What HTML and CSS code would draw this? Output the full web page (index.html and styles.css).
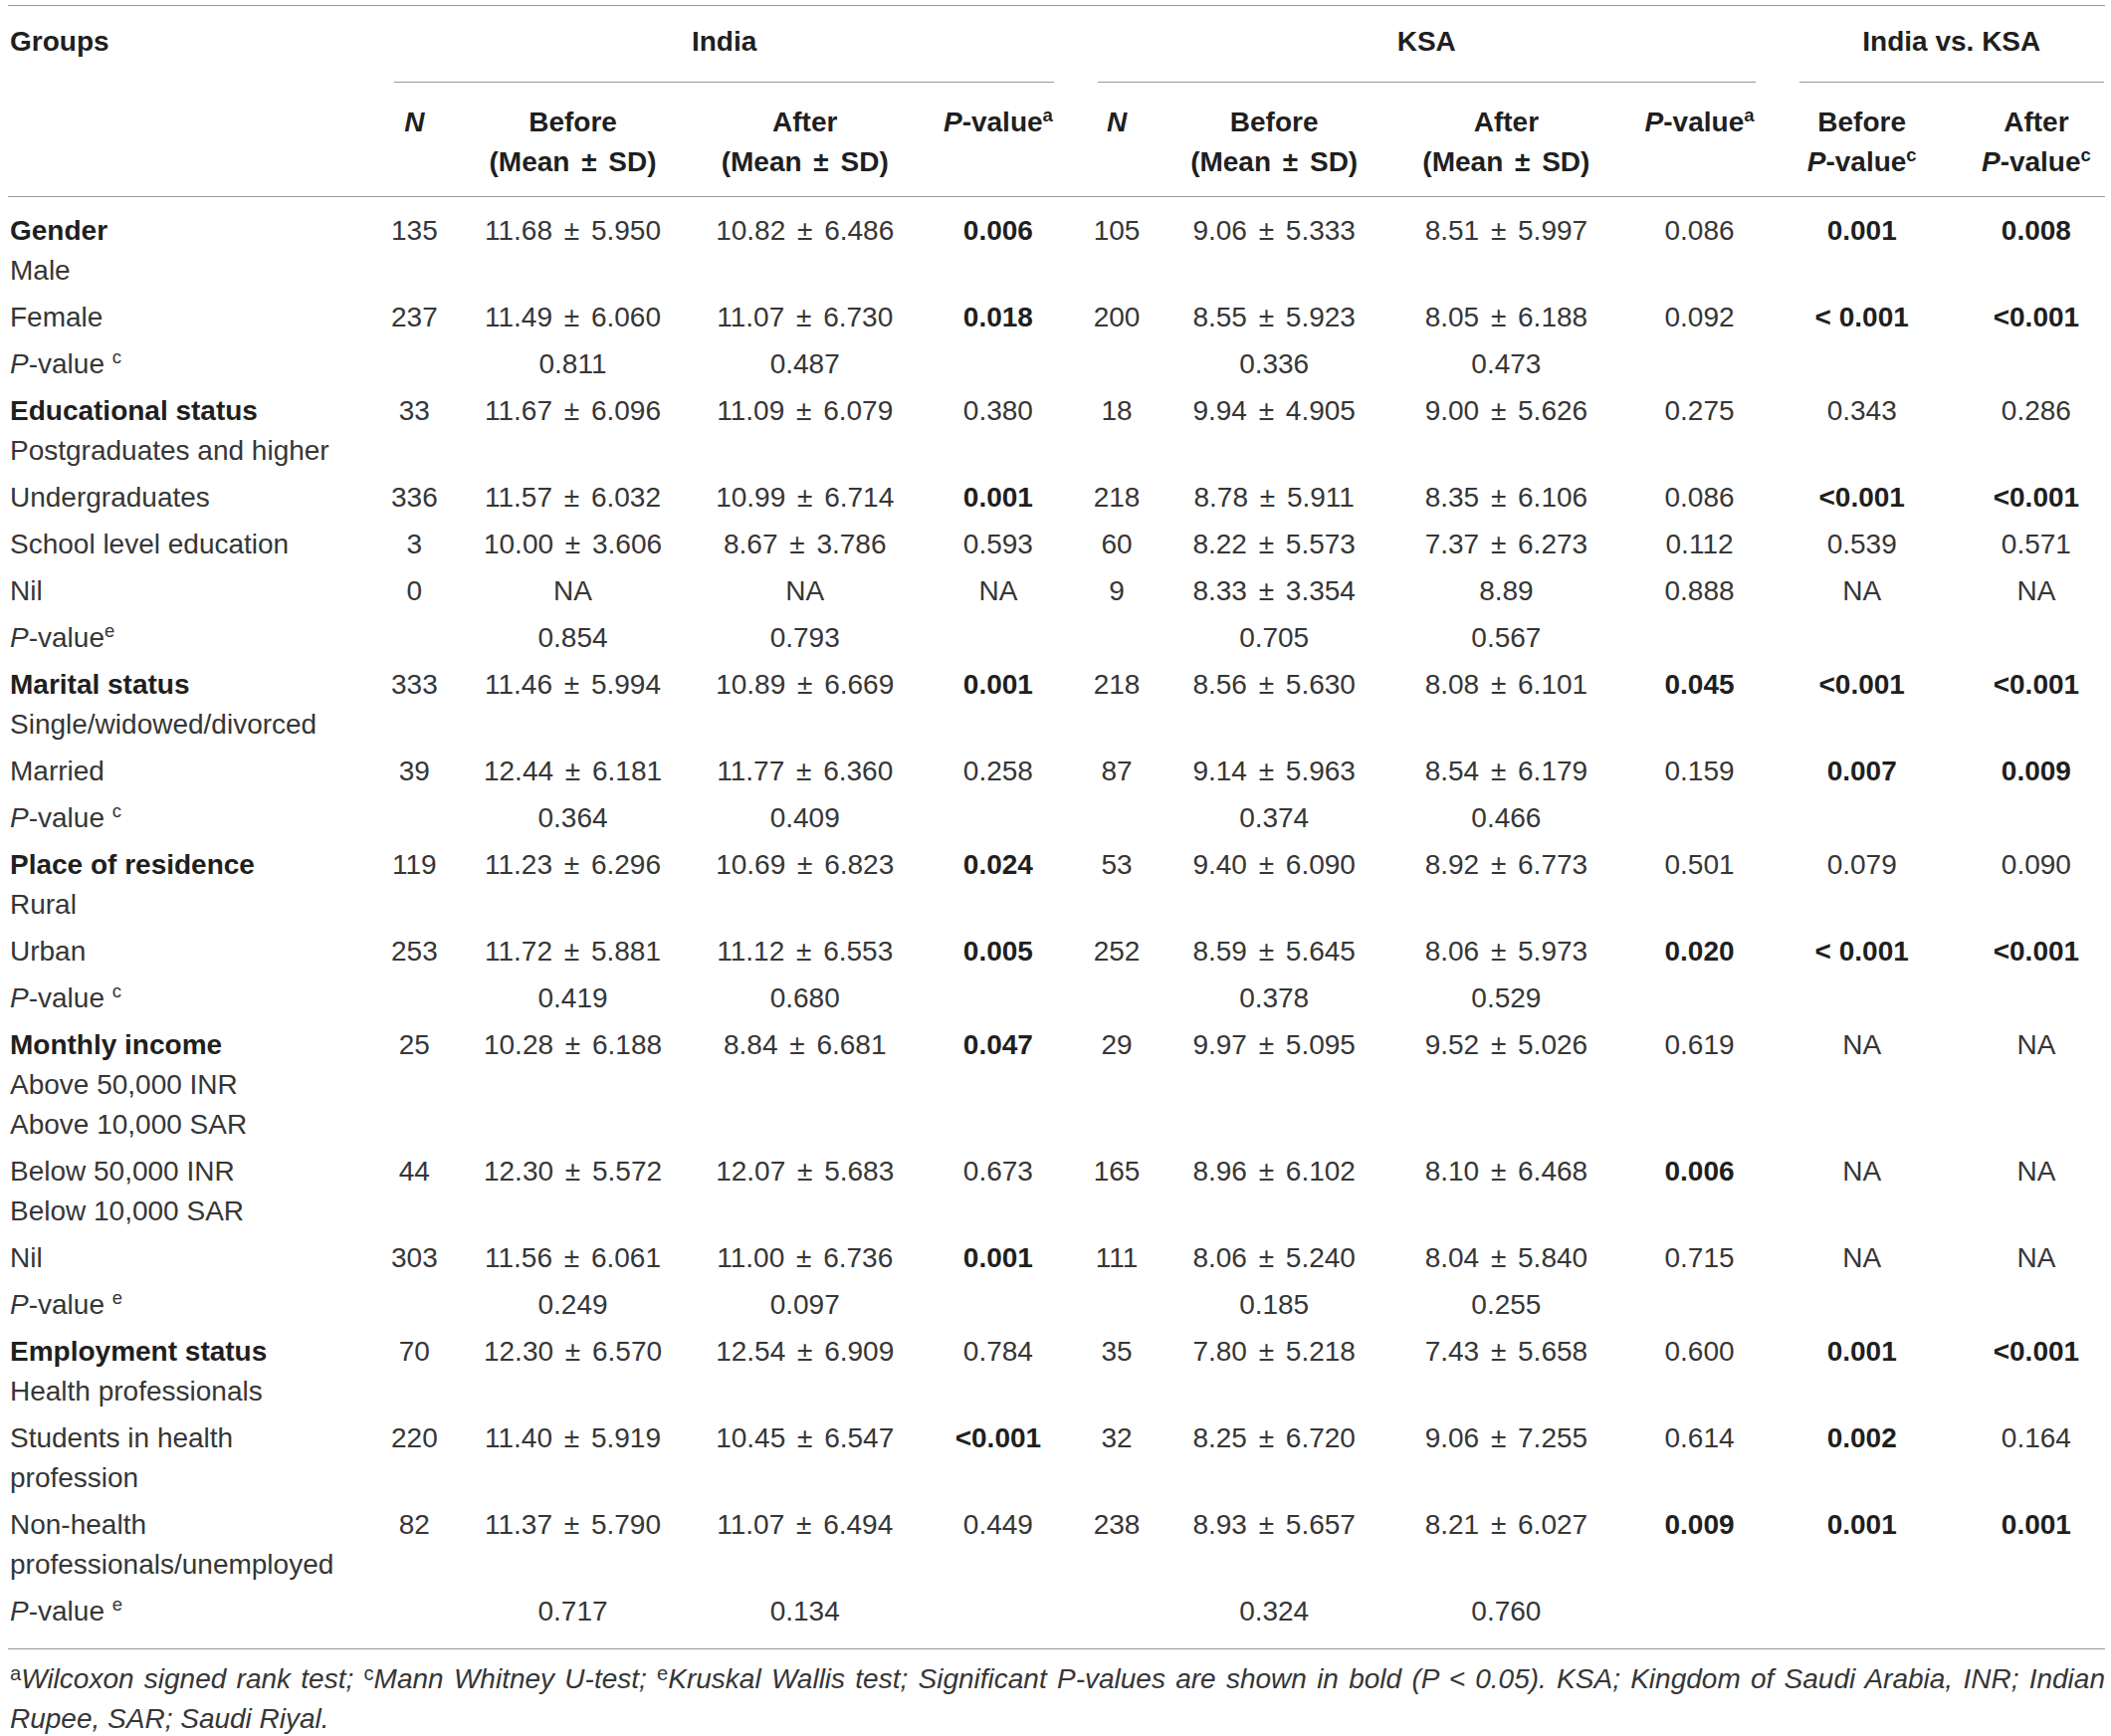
FILE: index.html
```html
<!DOCTYPE html>
<html lang="en">
<head>
<meta charset="utf-8">
<title>Table</title>
<link rel="stylesheet" href="styles.css">
</head>
<body>
<div class="page">
<table class="data">
  <colgroup>
    <col class="c-grp"><col class="c-n"><col class="c-b"><col class="c-a"><col class="c-p">
    <col class="c-n2"><col class="c-b"><col class="c-a"><col class="c-p"><col class="c-vb"><col class="c-va">
  </colgroup>
  <thead>
    <tr class="h1">
      <th rowspan="2" class="lbl groups">Groups</th>
      <th colspan="4" class="grp"><div class="grp-label">India</div></th>
      <th colspan="4" class="grp"><div class="grp-label">KSA</div></th>
      <th colspan="2" class="grp"><div class="grp-label">India vs. KSA</div></th>
    </tr>
    <tr class="h2">
      <th><i>N</i></th>
      <th>Before<br><span class="pm">(Mean ± SD)</span></th>
      <th>After<br><span class="pm">(Mean ± SD)</span></th>
      <th><i>P</i>-value<sup>a</sup></th>
      <th><i>N</i></th>
      <th>Before<br><span class="pm">(Mean ± SD)</span></th>
      <th>After<br><span class="pm">(Mean ± SD)</span></th>
      <th><i>P</i>-value<sup>a</sup></th>
      <th>Before<br><i>P</i>-value<sup>c</sup></th>
      <th>After<br><i>P</i>-value<sup>c</sup></th>
    </tr>
  </thead>
  <tbody>
    <tr class="first">
      <td class="lbl"><b>Gender</b><br>Male</td>
      <td>135</td><td class="pm">11.68 ± 5.950</td><td class="pm">10.82 ± 6.486</td><td><b>0.006</b></td>
      <td>105</td><td class="pm">9.06 ± 5.333</td><td class="pm">8.51 ± 5.997</td><td>0.086</td>
      <td><b>0.001</b></td><td><b>0.008</b></td>
    </tr>
    <tr>
      <td class="lbl">Female</td>
      <td>237</td><td class="pm">11.49 ± 6.060</td><td class="pm">11.07 ± 6.730</td><td><b>0.018</b></td>
      <td>200</td><td class="pm">8.55 ± 5.923</td><td class="pm">8.05 ± 6.188</td><td>0.092</td>
      <td><b>&lt; 0.001</b></td><td><b>&lt;0.001</b></td>
    </tr>
    <tr>
      <td class="lbl"><i>P</i>-value <sup>c</sup></td>
      <td></td><td>0.811</td><td>0.487</td><td></td>
      <td></td><td>0.336</td><td>0.473</td><td></td>
      <td></td><td></td>
    </tr>
    <tr>
      <td class="lbl"><b>Educational status</b><br>Postgraduates and higher</td>
      <td>33</td><td class="pm">11.67 ± 6.096</td><td class="pm">11.09 ± 6.079</td><td>0.380</td>
      <td>18</td><td class="pm">9.94 ± 4.905</td><td class="pm">9.00 ± 5.626</td><td>0.275</td>
      <td>0.343</td><td>0.286</td>
    </tr>
    <tr>
      <td class="lbl">Undergraduates</td>
      <td>336</td><td class="pm">11.57 ± 6.032</td><td class="pm">10.99 ± 6.714</td><td><b>0.001</b></td>
      <td>218</td><td class="pm">8.78 ± 5.911</td><td class="pm">8.35 ± 6.106</td><td>0.086</td>
      <td><b>&lt;0.001</b></td><td><b>&lt;0.001</b></td>
    </tr>
    <tr>
      <td class="lbl">School level education</td>
      <td>3</td><td class="pm">10.00 ± 3.606</td><td class="pm">8.67 ± 3.786</td><td>0.593</td>
      <td>60</td><td class="pm">8.22 ± 5.573</td><td class="pm">7.37 ± 6.273</td><td>0.112</td>
      <td>0.539</td><td>0.571</td>
    </tr>
    <tr>
      <td class="lbl">Nil</td>
      <td>0</td><td>NA</td><td>NA</td><td>NA</td>
      <td>9</td><td class="pm">8.33 ± 3.354</td><td>8.89</td><td>0.888</td>
      <td>NA</td><td>NA</td>
    </tr>
    <tr>
      <td class="lbl"><i>P</i>-value<sup>e</sup></td>
      <td></td><td>0.854</td><td>0.793</td><td></td>
      <td></td><td>0.705</td><td>0.567</td><td></td>
      <td></td><td></td>
    </tr>
    <tr>
      <td class="lbl"><b>Marital status</b><br>Single/widowed/divorced</td>
      <td>333</td><td class="pm">11.46 ± 5.994</td><td class="pm">10.89 ± 6.669</td><td><b>0.001</b></td>
      <td>218</td><td class="pm">8.56 ± 5.630</td><td class="pm">8.08 ± 6.101</td><td><b>0.045</b></td>
      <td><b>&lt;0.001</b></td><td><b>&lt;0.001</b></td>
    </tr>
    <tr>
      <td class="lbl">Married</td>
      <td>39</td><td class="pm">12.44 ± 6.181</td><td class="pm">11.77 ± 6.360</td><td>0.258</td>
      <td>87</td><td class="pm">9.14 ± 5.963</td><td class="pm">8.54 ± 6.179</td><td>0.159</td>
      <td><b>0.007</b></td><td><b>0.009</b></td>
    </tr>
    <tr>
      <td class="lbl"><i>P</i>-value <sup>c</sup></td>
      <td></td><td>0.364</td><td>0.409</td><td></td>
      <td></td><td>0.374</td><td>0.466</td><td></td>
      <td></td><td></td>
    </tr>
    <tr>
      <td class="lbl"><b>Place of residence</b><br>Rural</td>
      <td>119</td><td class="pm">11.23 ± 6.296</td><td class="pm">10.69 ± 6.823</td><td><b>0.024</b></td>
      <td>53</td><td class="pm">9.40 ± 6.090</td><td class="pm">8.92 ± 6.773</td><td>0.501</td>
      <td>0.079</td><td>0.090</td>
    </tr>
    <tr>
      <td class="lbl">Urban</td>
      <td>253</td><td class="pm">11.72 ± 5.881</td><td class="pm">11.12 ± 6.553</td><td><b>0.005</b></td>
      <td>252</td><td class="pm">8.59 ± 5.645</td><td class="pm">8.06 ± 5.973</td><td><b>0.020</b></td>
      <td><b>&lt; 0.001</b></td><td><b>&lt;0.001</b></td>
    </tr>
    <tr>
      <td class="lbl"><i>P</i>-value <sup>c</sup></td>
      <td></td><td>0.419</td><td>0.680</td><td></td>
      <td></td><td>0.378</td><td>0.529</td><td></td>
      <td></td><td></td>
    </tr>
    <tr>
      <td class="lbl"><b>Monthly income</b><br>Above 50,000 INR<br>Above 10,000 SAR</td>
      <td>25</td><td class="pm">10.28 ± 6.188</td><td class="pm">8.84 ± 6.681</td><td><b>0.047</b></td>
      <td>29</td><td class="pm">9.97 ± 5.095</td><td class="pm">9.52 ± 5.026</td><td>0.619</td>
      <td>NA</td><td>NA</td>
    </tr>
    <tr>
      <td class="lbl">Below 50,000 INR<br>Below 10,000 SAR</td>
      <td>44</td><td class="pm">12.30 ± 5.572</td><td class="pm">12.07 ± 5.683</td><td>0.673</td>
      <td>165</td><td class="pm">8.96 ± 6.102</td><td class="pm">8.10 ± 6.468</td><td><b>0.006</b></td>
      <td>NA</td><td>NA</td>
    </tr>
    <tr>
      <td class="lbl">Nil</td>
      <td>303</td><td class="pm">11.56 ± 6.061</td><td class="pm">11.00 ± 6.736</td><td><b>0.001</b></td>
      <td>111</td><td class="pm">8.06 ± 5.240</td><td class="pm">8.04 ± 5.840</td><td>0.715</td>
      <td>NA</td><td>NA</td>
    </tr>
    <tr>
      <td class="lbl"><i>P</i>-value <sup>e</sup></td>
      <td></td><td>0.249</td><td>0.097</td><td></td>
      <td></td><td>0.185</td><td>0.255</td><td></td>
      <td></td><td></td>
    </tr>
    <tr>
      <td class="lbl"><b>Employment status</b><br>Health professionals</td>
      <td>70</td><td class="pm">12.30 ± 6.570</td><td class="pm">12.54 ± 6.909</td><td>0.784</td>
      <td>35</td><td class="pm">7.80 ± 5.218</td><td class="pm">7.43 ± 5.658</td><td>0.600</td>
      <td><b>0.001</b></td><td><b>&lt;0.001</b></td>
    </tr>
    <tr>
      <td class="lbl">Students in health<br>profession</td>
      <td>220</td><td class="pm">11.40 ± 5.919</td><td class="pm">10.45 ± 6.547</td><td><b>&lt;0.001</b></td>
      <td>32</td><td class="pm">8.25 ± 6.720</td><td class="pm">9.06 ± 7.255</td><td>0.614</td>
      <td><b>0.002</b></td><td>0.164</td>
    </tr>
    <tr>
      <td class="lbl">Non-health<br>professionals/unemployed</td>
      <td>82</td><td class="pm">11.37 ± 5.790</td><td class="pm">11.07 ± 6.494</td><td>0.449</td>
      <td>238</td><td class="pm">8.93 ± 5.657</td><td class="pm">8.21 ± 6.027</td><td><b>0.009</b></td>
      <td><b>0.001</b></td><td><b>0.001</b></td>
    </tr>
    <tr class="last">
      <td class="lbl"><i>P</i>-value <sup>e</sup></td>
      <td></td><td>0.717</td><td>0.134</td><td></td>
      <td></td><td>0.324</td><td>0.760</td><td></td>
      <td></td><td></td>
    </tr>
  </tbody>
</table>
<div class="note">
  <p class="note-line just"><sup>a</sup><i>Wilcoxon signed rank test; </i><sup>c</sup><i>Mann Whitney U-test; </i><sup>e</sup><i>Kruskal Wallis test; Significant P-values are shown in bold (P &lt; 0.05). KSA; Kingdom of Saudi Arabia, INR; Indian</i></p>
  <p class="note-line"><i>Rupee, SAR; Saudi Riyal.</i></p>
</div>
</div>
</body>
</html>
```
FILE: styles.css
```css
* { box-sizing: border-box; }
html, body { margin: 0; padding: 0; background: #ffffff; }
body {
  font-family: "Liberation Sans", Arial, Helvetica, sans-serif;
  color: #363636;
}
.page { padding: 5px 6px 0 8px; width: 2121px; }

table.data {
  width: 2107px;
  table-layout: fixed;
  border-collapse: collapse;
  font-size: 28px;
  line-height: 40px;
}
.c-grp { width: 345px; }
.c-n { width: 126px; }
.c-b { width: 192px; }
.c-a { width: 274px; }
.c-p { width: 114px; }
.c-n2 { width: 124px; }
.c-vb { width: 212px; }
.c-va { width: 138px; }

th, td {
  padding: 3px 0 4px 0;
  vertical-align: top;
  text-align: center;
  white-space: nowrap;
}
th { font-weight: 700; color: #1f1f1f; }
b { font-weight: 700; color: #1f1f1f; }
td.lbl, th.lbl { text-align: left; padding-left: 2px; }

.pm { word-spacing: 4px; }

sup {
  font-size: 0.66em;
  line-height: 0;
  vertical-align: 0.55em;
}

/* header */
tr.h1 th { border-top: 1px solid #9a9a9a; padding-top: 16px; padding-bottom: 0; }
th.groups { border-bottom: 1px solid #9a9a9a; }
th.grp { padding-left: 43px; padding-right: 1px; }
.grp-label { padding-bottom: 20px; border-bottom: 1px solid #9a9a9a; }
tr.h2 th { padding-top: 20px; padding-bottom: 14px; border-bottom: 1px solid #9a9a9a; }

/* body */
tr.first td { padding-top: 14px; }
tr.last td { padding-bottom: 17px; border-bottom: 1px solid #9a9a9a; }

.note {
  margin: 10px 0 0 0;
  padding-left: 2px;
  font-size: 28px;
  line-height: 40px;
  color: #363636;
  width: 2107px;
}
.note-line { margin: 0; }
.note-line.just { text-align: justify; text-align-last: justify; }
.note i { font-style: italic; }
.note sup { font-size: 0.72em; vertical-align: 0.4em; }
```
